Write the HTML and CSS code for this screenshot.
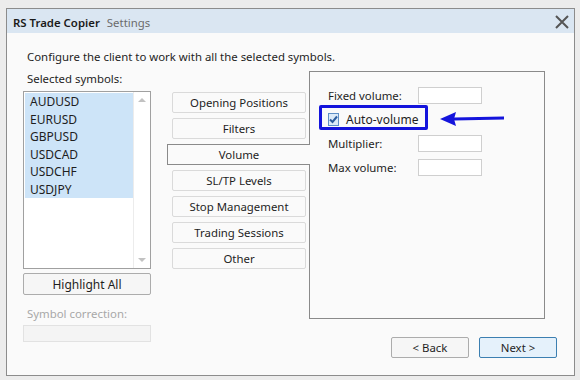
FILE: index.html
```html
<!DOCTYPE html>
<html lang="en">
<head>
  <meta charset="UTF-8" />
  <title>RS Trade Copier Settings</title>
  <link rel="stylesheet" href="styles.css">
</head>
<body>
  <div class="window">
    <div class="titlebar">
      <span class="app-name">RS Trade Copier</span>
      <span class="page-name">Settings</span>
      <svg class="close" width="14" height="14" viewBox="0 0 14 14">
        <path d="M1 1 L13 13 M13 1 L1 13" stroke="#555" stroke-width="2" fill="none"/>
      </svg>
    </div>

    <div class="content">
      <p class="intro">Configure the client to work with all the selected symbols.</p>

      <div class="main">
        <div class="symbols">
          <label class="caption">Selected symbols:</label>
          <div class="listbox">
            <ul class="items">
              <li>AUDUSD</li>
              <li>EURUSD</li>
              <li>GBPUSD</li>
              <li>USDCAD</li>
              <li>USDCHF</li>
              <li>USDJPY</li>
            </ul>
            <div class="scrollbar">
              <span class="arrow up"></span>
              <span class="arrow down"></span>
            </div>
          </div>
          <button class="btn wide">Highlight All</button>
          <label class="caption disabled">Symbol correction:</label>
          <input class="field disabled-field" type="text" disabled>
        </div>

        <div class="right">
          <div class="settings">
            <div class="tabs">
              <button class="tab">Opening Positions</button>
              <button class="tab">Filters</button>
              <button class="tab active">Volume</button>
              <button class="tab">SL/TP Levels</button>
              <button class="tab">Stop Management</button>
              <button class="tab">Trading Sessions</button>
              <button class="tab">Other</button>
            </div>

            <div class="panel">
              <div class="form">
                <span>Fixed volume:</span>
                <input class="field" type="text">
                <span class="check-row"><span class="checkbox"><svg width="9" height="9" viewBox="0 0 9 9"><path d="M1 4.5 L3.5 7 L8 1.5" stroke="#2c5d9e" stroke-width="2" fill="none"/></svg></span>Auto-volume</span>
                <span></span>
                <span>Multiplier:</span>
                <input class="field" type="text">
                <span>Max volume:</span>
                <input class="field" type="text">
              </div>
              <div class="callout"></div>
              <svg class="pointer" width="66" height="16" viewBox="0 0 66 16">
                <path d="M14 8 L64 7" stroke="#1414dc" stroke-width="3" fill="none"/>
                <path d="M0 8 L16 1 L14 8 L16 15 Z" fill="#1414dc"/>
              </svg>
            </div>
          </div>

          <div class="footer">
            <button class="btn nav">&lt; Back</button>
            <button class="btn nav primary">Next &gt;</button>
          </div>
        </div>
      </div>
    </div>
  </div>
</body>
</html>
```

FILE: styles.css
```css
body {
  margin: 0;
  background: #ececec;
  font-family: "Noto Sans", Arial, sans-serif;
  font-size: 11.4px;
  color: #1e1e1e;
}
.window {
  margin: 8px 0 0 6px;
  width: 567px;
  height: 366px;
  border: 1px solid #8c8c8c;
  background: #fafafa;
  display: flex;
  flex-direction: column;
}
.titlebar {
  background: #dae6f2;
  display: flex;
  align-items: center;
  padding: 2px 5px 0 6px;
  box-sizing: border-box;
  height: 24px;
}
.app-name {
  font-weight: 600;
  color: #1a1a1a;
}
.page-name {
  color: #6b6b6b;
  margin-left: 7px;
}
.close {
  margin-left: auto;
  margin-top: -1px;
}
.content {
  flex: 1;
  padding: 16px 16px 0 16px;
}
.intro {
  margin: 0 0 6px 4px;
  line-height: 16px;
}
.main {
  display: flex;
  align-items: flex-start;
}
.symbols {
  width: 128px;
  display: flex;
  flex-direction: column;
}
.caption {
  line-height: 16px;
  margin: 0 0 4px 4px;
}
.caption.disabled {
  color: #a8a8a8;
  margin-top: 11px;
  margin-bottom: 3px;
}
.listbox {
  height: 176px;
  border: 1px solid #a0a0a0;
  background: #fff;
  display: flex;
}
.items {
  list-style: none;
  margin: 1px 0 0 1px;
  padding: 0;
  width: 108px;
}
.items li {
  background: #cde4f8;
  height: 17.5px;
  line-height: 17.5px;
  padding-left: 5px;
  font-size: 12px;
}
.scrollbar {
  margin-left: auto;
  width: 16px;
  border-left: 1px solid #ececec;
  display: flex;
  flex-direction: column;
  justify-content: space-between;
  align-items: center;
  padding: 6px 0;
}
.arrow {
  width: 0;
  height: 0;
  border-left: 4px solid transparent;
  border-right: 4px solid transparent;
}
.arrow.up {
  border-bottom: 4px solid #c2c2c2;
}
.arrow.down {
  border-top: 4px solid #c2c2c2;
}
.btn {
  font-family: inherit;
  font-size: 11.4px;
  color: #1e1e1e;
  background: #f6f6f6;
  border: 1px solid #acacac;
  border-radius: 2px;
  padding: 0;
}
.btn.wide {
  height: 22px;
  margin-top: 4px;
  font-size: 12px;
}
.field {
  height: 17px;
  box-sizing: border-box;
  border: 1px solid #cfcfcf;
  background: #fff;
  padding: 0;
}
.disabled-field {
  width: 128px;
  background: #f4f4f4;
  border-color: #e2e2e2;
}
.right {
  flex: 1;
  display: flex;
  flex-direction: column;
}
.settings {
  display: flex;
  align-items: flex-start;
}
.tabs {
  width: 142px;
  margin-left: 16px;
  padding-top: 21px;
  display: flex;
  flex-direction: column;
  gap: 5px;
}
.tab {
  font-family: inherit;
  font-size: 11.4px;
  color: #1e1e1e;
  height: 21px;
  margin: 0 3px 0 5px;
  background: #fafafa;
  border: 1px solid #dadada;
  border-radius: 2px;
  padding: 0;
}
.tab.active {
  margin: 0 -1px 0 0;
  height: 21px;
  border: 1px solid #8a8a8a;
  border-right: none;
  border-radius: 0;
  position: relative;
  z-index: 1;
}
.panel {
  position: relative;
  width: 234px;
  height: 246px;
  border: 1px solid #8a8a8a;
  background: #fafafa;
}
.form {
  display: grid;
  grid-template-columns: 90px 64px;
  grid-auto-rows: 24px;
  align-items: center;
  padding: 11px 0 0 18px;
}
.form .field {
  width: 64px;
}
.check-row {
  display: flex;
  align-items: center;
  white-space: nowrap;
  font-size: 12px;
}
.checkbox {
  width: 11px;
  height: 11px;
  border: 1px solid #5e8fc6;
  background: #dbeaf8;
  margin-right: 7px;
  display: flex;
  align-items: center;
  justify-content: center;
}
.callout {
  position: absolute;
  left: 9px;
  top: 33px;
  width: 103px;
  height: 19px;
  border: 3px solid #1414dc;
  border-radius: 2px;
}
.pointer {
  position: absolute;
  left: 130px;
  top: 39px;
}
.footer {
  display: flex;
  justify-content: flex-end;
  gap: 10px;
  margin-top: 18px;
  padding-right: 1px;
}
.btn.nav {
  width: 78px;
  height: 21px;
}
.btn.primary {
  background: #e5f1fb;
  border-color: #3c7fb1;
}
```
